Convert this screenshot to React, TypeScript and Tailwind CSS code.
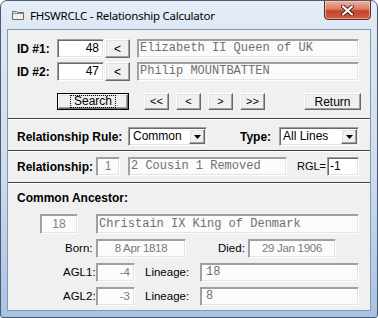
import React from "react";

const sunken =
  "box-border border border-t-[#a0a0a0] border-l-[#a0a0a0] border-b-white border-r-white shadow-[inset_1px_1px_0_#696969,inset_-1px_-1px_0_#e3e3e3] bg-white";
const sunkenRO =
  "box-border border border-t-[#a0a0a0] border-l-[#a0a0a0] border-b-white border-r-white shadow-[inset_1px_1px_0_#a0a0a0,inset_-1px_-1px_0_#e3e3e3] bg-[#fbfbfb]";
const raised =
  "box-border border border-t-white border-l-white border-b-[#696969] border-r-[#696969] shadow-[inset_-1px_-1px_0_#a0a0a0,inset_1px_1px_0_#e3e3e3] bg-[#f0f0f0]";
const mono = "font-['Liberation_Mono','Courier_New',monospace] text-[12px] text-[#707070]";

function Arrow() {
  return (
    <svg width="7" height="4" viewBox="0 0 7 4">
      <path d="M0 0h7L3.5 4z" fill="#000" />
    </svg>
  );
}

function Separator({ className }: { className: string }) {
  return (
    <div className={className}>
      <div className="h-px bg-[#404040]" />
      <div className="h-px bg-white" />
    </div>
  );
}

export default function App() {
  return (
    <div className="w-[378px] h-[318px] font-['Liberation_Sans',Arial,sans-serif] text-black select-none">
      <div className="w-full h-full box-border rounded-t-[7px] rounded-b-[3px] border border-[#4e5a6c] bg-[linear-gradient(180deg,#e6eef8_0%,#dbe6f3_12%,#cddcef_55%,#a8c2e4_100%)] flex flex-col overflow-hidden">
        {/* Title bar */}
        <div className="h-[28px] flex items-start shrink-0">
          <div className="h-[28px] pl-[11px] flex items-center">
            <svg width="12" height="10" viewBox="0 0 12 10">
              <path d="M0.5 1.5h4l1 1h6v7h-11z" fill="#f4f2e6" stroke="#6a6a6a" />
              <path d="M0.5 3.5h11" stroke="#8a8a8a" />
            </svg>
          </div>
          <span className="ml-[6px] h-[28px] leading-[29px] font-['Noto_Sans',sans-serif] text-[11.5px] tracking-[-0.25px] text-black">
            FHSWRCLC - Relationship Calculator
          </span>
          <div className="ml-auto mr-[6px] -mt-px w-[47px] h-[20px] box-border rounded-b-[4px] border border-[#5a2b24] bg-[linear-gradient(180deg,#ecb0a2_0%,#dc7c64_45%,#c7412a_55%,#d0603f_100%)] shadow-[inset_0_0_0_1px_rgba(255,220,210,0.55)] flex items-center justify-center">
            <svg width="13" height="11" viewBox="0 0 13 11">
              <path d="M2 1.5l9 8M11 1.5l-9 8" stroke="#4a1a12" strokeWidth="3.8" strokeLinecap="round" />
              <path d="M2 1.5l9 8M11 1.5l-9 8" stroke="#ffffff" strokeWidth="2.2" strokeLinecap="round" />
            </svg>
          </div>
        </div>

        {/* Client area */}
        <div className="mx-[6px] mb-[6px] flex-1 border border-[#8797b0] bg-[#f0f0f0] flex flex-col text-[12px]">
          {/* ID #1 */}
          <div className="flex mt-[9px] pl-[9px] h-[19px] items-center">
            <span className="w-[40px] font-bold text-[12px]">ID #1:</span>
            <div className={`${sunken} w-[47px] h-[19px] text-right pr-[4px] leading-[17px]`}>48</div>
            <div className={`${raised} ml-px w-[25px] h-[19px] flex items-center justify-center`}>&lt;</div>
            <div className={`${sunkenRO} ${mono} ml-[7px] w-[222px] h-[19px] pl-[2px] leading-[17px]`}>
              Elizabeth II Queen of UK
            </div>
          </div>
          {/* ID #2 */}
          <div className="flex mt-[4px] pl-[9px] h-[19px] items-center">
            <span className="w-[40px] font-bold text-[12px]">ID #2:</span>
            <div className={`${sunken} w-[47px] h-[19px] text-right pr-[4px] leading-[17px]`}>47</div>
            <div className={`${raised} ml-px w-[25px] h-[19px] flex items-center justify-center`}>&lt;</div>
            <div className={`${sunkenRO} ${mono} ml-[7px] w-[222px] h-[19px] pl-[2px] leading-[17px]`}>
              Philip MOUNTBATTEN
            </div>
          </div>
          {/* Buttons */}
          <div className="flex mt-[12px] h-[17px] items-center text-[12px]">
            <div className="ml-[49px] w-[72px] h-[17px] box-border border border-black">
              <div className={`${raised} w-full h-full flex items-center justify-center`}>
                <span className="px-[3px] leading-[11px] outline outline-1 outline-dotted outline-black">
                  Search
                </span>
              </div>
            </div>
            <div className={`${raised} ml-[15px] w-[25px] h-[17px] flex items-center justify-center text-[11px]`}>&lt;&lt;</div>
            <div className={`${raised} ml-[7px] w-[25px] h-[17px] flex items-center justify-center text-[11px]`}>&lt;</div>
            <div className={`${raised} ml-[7px] w-[25px] h-[17px] flex items-center justify-center text-[11px]`}>&gt;</div>
            <div className={`${raised} ml-[7px] w-[25px] h-[17px] flex items-center justify-center text-[11px]`}>&gt;&gt;</div>
            <div className={`${raised} ml-[39px] w-[57px] h-[17px] flex items-center justify-center`}>Return</div>
          </div>

          <Separator className="mt-[8px]" />

          {/* Relationship rule */}
          <div className="flex mt-[7px] pl-[9px] h-[19px] items-center">
            <span className="w-[111px] font-bold text-[12px]">Relationship Rule:</span>
            <div className={`${sunken} w-[79px] h-[19px] flex items-center pl-[4px]`}>
              <span className="flex-1 leading-[17px]">Common</span>
              <div className={`${raised} w-[16px] h-[15px] mr-px flex items-center justify-center`}>
                <Arrow />
              </div>
            </div>
            <span className="ml-[33px] w-[39px] font-bold text-[12px]">Type:</span>
            <div className={`${sunken} w-[80px] h-[19px] flex items-center pl-[3px]`}>
              <span className="flex-1 leading-[17px]">All Lines</span>
              <div className={`${raised} w-[16px] h-[15px] mr-px flex items-center justify-center`}>
                <Arrow />
              </div>
            </div>
          </div>

          <Separator className="mt-[4px]" />

          {/* Relationship */}
          <div className="flex mt-[5px] pl-[9px] h-[19px] items-center">
            <span className="w-[79px] font-bold text-[12px]">Relationship:</span>
            <div className={`${sunkenRO} w-[24px] h-[19px] text-center leading-[17px] text-[#808080]`}>1</div>
            <div className={`${sunkenRO} ${mono} ml-[8px] w-[159px] h-[19px] pl-[2px] leading-[17px]`}>
              2 Cousin 1 Removed
            </div>
            <span className="ml-[10px] w-[30px] text-[11px]">RGL=</span>
            <div className={`${sunken} w-[32px] h-[19px] pl-[2px] leading-[17px]`}>-1</div>
          </div>

          <Separator className="mt-[6px]" />

          {/* Common ancestor */}
          <div className="mt-[7px] pl-[9px] h-[14px] leading-[14px] font-bold text-[12px]">Common Ancestor:</div>

          <div className="flex mt-[9px] pl-[32px] h-[20px] items-center">
            <div className={`${sunkenRO} w-[38px] h-[20px] text-center leading-[18px] text-[#808080]`}>18</div>
            <div className={`${sunkenRO} ${mono} ml-[18px] w-[263px] h-[20px] pl-[2px] leading-[18px]`}>
              Christain IX King of Denmark
            </div>
          </div>

          <div className="flex mt-[5px] pl-[56px] h-[19px] items-center text-[11.5px]">
            <span className="w-[32px] pl-px">Born:</span>
            <div className={`${sunkenRO} w-[90px] h-[19px] text-center leading-[17px] text-[#7a7a7a] tracking-[-0.3px]`}>
              8 Apr 1818
            </div>
            <span className="ml-[32px] w-[30px]">Died:</span>
            <div className={`${sunkenRO} w-[88px] h-[19px] text-center leading-[17px] text-[#7a7a7a] tracking-[-0.3px]`}>
              29 Jan 1906
            </div>
          </div>

          <div className="flex mt-[5px] pl-[55px] h-[19px] items-center text-[11.5px]">
            <span className="w-[33px]">AGL1:</span>
            <div className={`${sunkenRO} w-[39px] h-[19px] text-right pr-[4px] leading-[17px] text-[#7a7a7a]`}>-4</div>
            <span className="ml-[10px] w-[55px]">Lineage:</span>
            <div className={`${sunkenRO} ${mono} w-[159px] h-[19px] pl-[5px] leading-[17px]`}>18</div>
          </div>

          <div className="flex mt-[5px] pl-[55px] h-[19px] items-center text-[11.5px]">
            <span className="w-[33px]">AGL2:</span>
            <div className={`${sunkenRO} w-[39px] h-[19px] text-right pr-[4px] leading-[17px] text-[#7a7a7a]`}>-3</div>
            <span className="ml-[10px] w-[55px]">Lineage:</span>
            <div className={`${sunkenRO} ${mono} w-[159px] h-[19px] pl-[5px] leading-[17px]`}>8</div>
          </div>
        </div>
      </div>
    </div>
  );
}
